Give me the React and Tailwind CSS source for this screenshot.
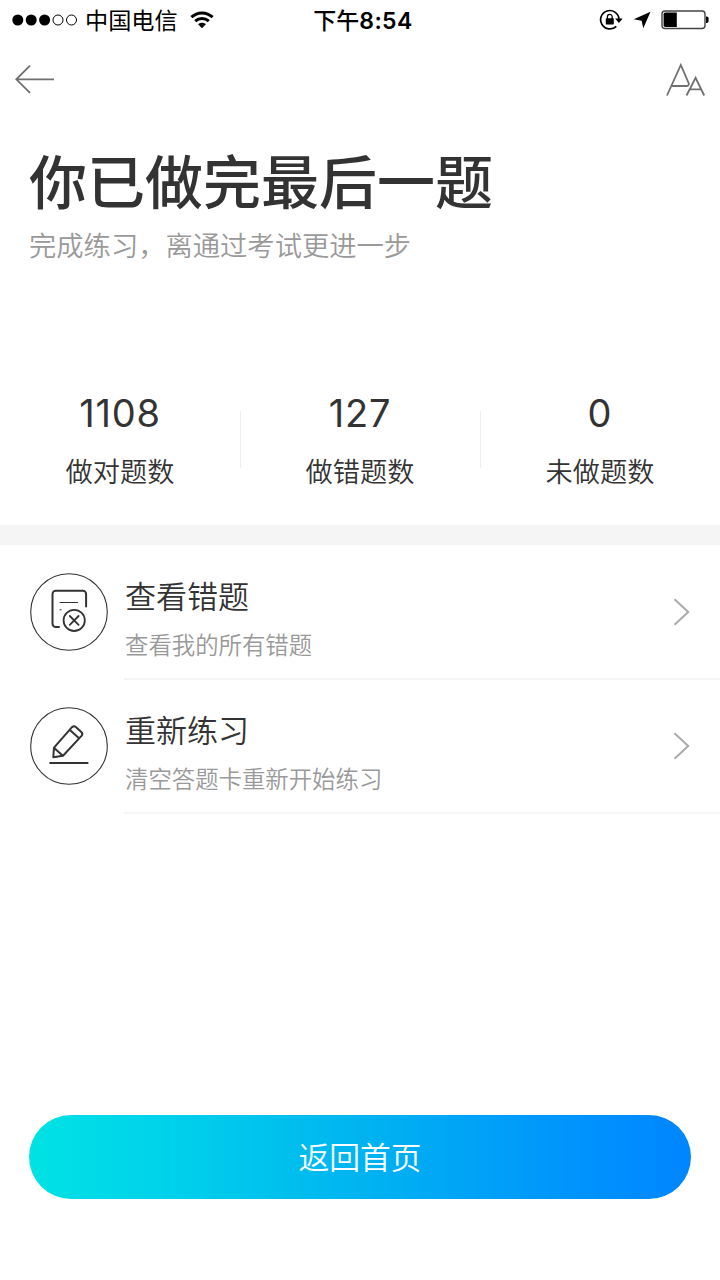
const stats = [
  { value: "1108", label: "做对题数" },
  { value: "127", label: "做错题数" },
  { value: "0", label: "未做题数" },
];

function StatusBar() {
  return (
    <header className="grid h-10 grid-cols-3 items-center pt-[2px] text-black">
      <div className="flex items-center pl-3">
        <svg className="-mt-[2px]" width="66" height="12" viewBox="0 0 66 12">
          <circle cx="5.8" cy="6" r="5.5" />
          <circle cx="19.2" cy="6" r="5.5" />
          <circle cx="32.6" cy="6" r="5.5" />
          <g fill="none" stroke="currentColor">
            <circle cx="46" cy="6" r="5" />
            <circle cx="59.5" cy="6" r="5" />
          </g>
        </svg>
        <span className="-mt-1 ml-[7px] whitespace-nowrap text-[23.2px] leading-9">中国电信</span>
        <svg className="-mt-[3px] ml-[12px] shrink-0" width="24" height="18" viewBox="0 0 24 18" fill="none" stroke="currentColor" strokeWidth="3">
          <path d="M1.4 6.2C7.4.5 16.6.5 22.6 6.2" />
          <path d="M5.2 10.2C9.2 6.5 14.8 6.5 18.8 10.2" />
          <path d="M12 17.2 8.1 13.3C10.2 11.3 13.8 11.3 15.9 13.3Z" fill="currentColor" stroke="none" />
        </svg>
      </div>
      <div className="-mt-[3px] whitespace-nowrap pl-[6px] text-center text-[23px] font-medium leading-9">
        下午<span className="font-[Inter] font-semibold tracking-[0.4px]">8:54</span>
      </div>
      <div className="-mt-[2px] flex items-center justify-end pr-[11px]">
        <svg width="24" height="22" viewBox="0 0 24 22">
          <path d="M17.3 17.3A9.2 9.2 0 1 1 20 10" fill="none" stroke="currentColor" strokeWidth="1.7" />
          <path d="M16.1 9.4h7.6l-3.8 4.6Z" />
          <rect x="6.8" y="9.2" width="8" height="6.2" rx=".6" />
          <path d="M8.4 10V7.8a2.4 2.4 0 0 1 4.8 0V10" fill="none" stroke="currentColor" strokeWidth="1.3" />
        </svg>
        <svg className="ml-[10px]" width="18" height="18" viewBox="0 0 18 18">
          <path d="M17.5.7 10.3 17.2 8.6 9.8.8 8.3Z" />
        </svg>
        <svg className="ml-[10px]" width="48" height="20" viewBox="0 0 48 20">
          <rect x="1" y="1" width="43" height="17.5" rx="3" fill="none" stroke="#444" strokeWidth="1.4" />
          <path d="M4.4 2.5h11.4v14.6H4.4a1.8 1.8 0 0 1-1.8-1.8V4.3A1.8 1.8 0 0 1 4.4 2.5Z" />
          <path d="M45 6.5h.6a2 2 0 0 1 2 2v2.4a2 2 0 0 1-2 2H45Z" />
        </svg>
      </div>
    </header>
  );
}

function NavBar() {
  return (
    <nav className="flex h-20 items-center justify-between pl-[15px] pr-[14px] text-[#707070]">
      <svg width="40" height="32" viewBox="0 0 40 32" fill="none" stroke="currentColor" strokeWidth="1.8">
        <path d="M39 15.3H1.3M15 1.7 1.3 15.3 15 28.8" />
      </svg>
      <svg width="40" height="34" viewBox="0 0 40 34" fill="none" stroke="currentColor" strokeWidth="1.8">
        <path d="M1 32.5 14.8 2 22.8 20.5Q23 23 20.5 23H6" />
        <path d="M20.5 32.5 29.6 14.8 38.2 32.5M23.5 26.4H35.5" />
      </svg>
    </nav>
  );
}

function WrongListIcon() {
  return (
    <svg width="78" height="78" viewBox="0 0 78 78" fill="none" stroke="#333" strokeWidth="2" strokeLinecap="round">
      <circle cx="39" cy="39" r="38.3" strokeWidth="1.1" />
      <path d="M29 54h-3.2a3.3 3.3 0 0 1-3.3-3.3V21a3.3 3.3 0 0 1 3.3-3.3h27a3.3 3.3 0 0 1 3.3 3.3v12.5" />
      <path d="M30 29.5h17.5M30 36.7h1.2" strokeWidth="1.1" />
      <circle cx="44.2" cy="47.4" r="10.6" strokeWidth="1.8" />
      <path d="m39.8 43 8.8 8.8m0-8.8-8.8 8.8" strokeWidth="1.8" />
    </svg>
  );
}

function PencilIcon() {
  return (
    <svg width="78" height="78" viewBox="0 0 78 78" fill="none" stroke="#333" strokeWidth="2" strokeLinejoin="round">
      <circle cx="39" cy="39" r="38.3" strokeWidth="1.1" />
      <path d="m23.3 50.2.7-9.6L42 20.2a2.8 2.8 0 0 1 3.8-.2l5.5 5a2.8 2.8 0 0 1 .2 3.9L33 48.7Z" />
      <path d="m24.2 41.1 8.6 7.6M40.2 23.2l8.8 8M19.4 56h39" />
    </svg>
  );
}

function ActionRow({ icon, title, description }) {
  return (
    <button className="flex h-[134px] w-full pl-[30px] text-left">
      <span className="mt-[27px] shrink-0">{icon}</span>
      <span className="ml-[16px] flex h-full flex-1 items-start justify-between border-b-2 border-[#f5f5f5] pr-[30px]">
        <span className="flex flex-col pl-[1px]">
          <span className="mt-[26px] text-[31px] font-[350] leading-[46px] text-[#333]">{title}</span>
          <span className="mt-[9px] text-[23.4px] font-[350] leading-[34px] text-[#999]">{description}</span>
        </span>
        <svg className="mt-[52px]" width="17" height="28" viewBox="0 0 17 28" fill="none" stroke="#aaa" strokeWidth="2">
          <path d="m1.5 1.3 13.7 12.7L1.5 26.7" />
        </svg>
      </span>
    </button>
  );
}

export default function App() {
  return (
    <div className="flex h-[1280px] w-[720px] flex-col overflow-hidden bg-white font-['Noto_Sans_CJK_SC',sans-serif] text-[#333]">
      <StatusBar />
      <NavBar />
      <section className="h-[270px] pl-[29px] pt-[22px]">
        <h1 className="text-[58px] font-medium leading-[74px]">你已做完最后一题</h1>
        <p className="mt-[8px] text-[27.3px] font-[350] leading-10 text-[#999]">完成练习，离通过考试更进一步</p>
      </section>
      <section className="grid h-[135px] grid-cols-3">
        {stats.map((item, index) => (
          <div key={item.label} className="flex">
            <div className="flex flex-1 flex-col items-center">
              <span className="font-[Inter] text-[38px] leading-[46px] tracking-[0.8px]">{item.value}</span>
              <span className="mt-[14px] text-[27.2px] font-[350] leading-10">{item.label}</span>
            </div>
            {index < 2 && <span className="-mr-px mt-[21px] h-[57px] w-px bg-[#eee]" />}
          </div>
        ))}
      </section>
      <div className="h-5 bg-[#f5f5f5]" />
      <section className="pt-px">
        <ActionRow icon={<WrongListIcon />} title="查看错题" description="查看我的所有错题" />
        <ActionRow icon={<PencilIcon />} title="重新练习" description="清空答题卡重新开始练习" />
      </section>
      <div className="mt-auto px-[29px] pb-[81px]">
        <button className="h-[84px] w-full rounded-full bg-[linear-gradient(90deg,#00e2e4_0%,#00d4ea_18%,#00b4f0_50%,#0094fc_82%,#0085ff_100%)] pb-[2px] text-[30.8px] font-[350] text-white">
          返回首页
        </button>
      </div>
    </div>
  );
}
